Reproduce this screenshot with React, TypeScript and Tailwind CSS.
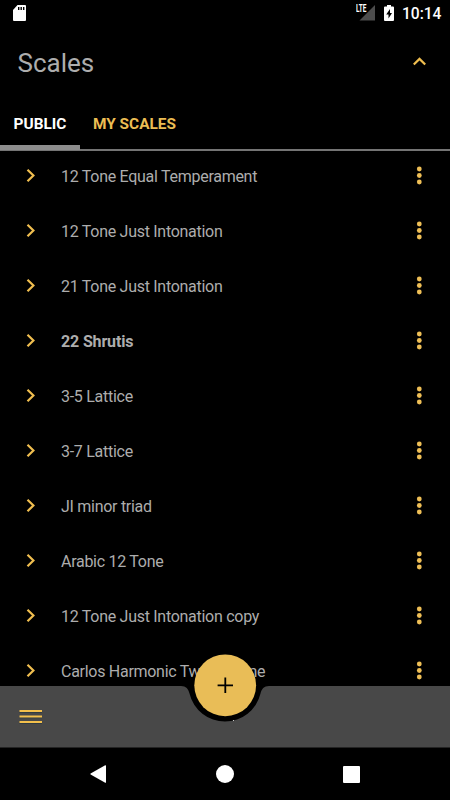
import React from "react";

const scales = [
  "12 Tone Equal Temperament",
  "12 Tone Just Intonation",
  "21 Tone Just Intonation",
  "22 Shrutis",
  "3-5 Lattice",
  "3-7 Lattice",
  "JI minor triad",
  "Arabic 12 Tone",
  "12 Tone Just Intonation copy",
  "Carlos Harmonic Twelve Tone",
];

const StatusBar = () => (
  <div className="flex h-[28px] shrink-0 items-center justify-between pl-[13px] pr-[8.500px] text-white">
    <svg width="13" height="16" viewBox="0 0 13 16" className="-mt-[2px]">
      <path d="M4.500 0H12a1 1 0 0 1 1 1v14a1 1 0 0 1-1 1H1a1 1 0 0 1-1-1V5z" fill="#fff" />
      <path d="M5.700 2v3M8.200 2v3M10.700 2v3" stroke="#000" strokeWidth="1.400" />
    </svg>
    <div className="flex items-center">
      <div className="relative -mt-[3px] mr-[9px] h-[17px] w-[20px]">
        <svg width="20" height="17" viewBox="0 0 20 17">
          <path d="M20 1v15.500H4.500z" fill="#4d4d4d" />
        </svg>
        <span className="absolute left-[1px] top-0 origin-left scale-x-[0.65] text-[10px] font-bold leading-[10px]">
          LTE
        </span>
      </div>
      <svg width="10" height="16" viewBox="0 0 10 16" className="-mt-[2px]">
        <path d="M3 0h4v1.500h2a1 1 0 0 1 1 1V15a1 1 0 0 1-1 1H1a1 1 0 0 1-1-1V2.500a1 1 0 0 1 1-1h2z" fill="#fff" />
        <path d="M6 4 2.200 9.600h2.300V13.500L8 8H6z" fill="#000" />
      </svg>
      <span className="ml-[7.500px] pt-px text-[15.600px] font-medium leading-[27px]">10:14</span>
    </div>
  </div>
);

const Header = () => (
  <div className="flex h-[69px] shrink-0 items-center justify-between pl-[17.500px] pr-[24px]">
    <h1 className="text-[26px] leading-[30px] text-[#adadad]">Scales</h1>
    <svg width="13" height="9" viewBox="0 0 13 9" className="-mt-[2px]" fill="none">
      <path d="M0.800 7.500 6.500 1.900 12.200 7.500" stroke="#f0be4f" strokeWidth="2.200" />
    </svg>
  </div>
);

const Tabs = () => (
  <div className="flex h-[54px] shrink-0 border-b-2 border-[#747474] text-[15.400px] font-bold">
    <button className="-mb-px flex w-[80px] items-center justify-center border-b-[5px] border-[#8e8e8e] pt-[8px] text-white">
      PUBLIC
    </button>
    <button className="flex items-center px-[13px] pt-[4px] text-[#ecbd53]">MY SCALES</button>
  </div>
);

const ScaleRow = ({ name, active }: { name: string; active: boolean }) => (
  <li className="flex h-[55px] items-center pl-[26px] pr-[28px]">
    <svg width="10" height="13" viewBox="0 0 10 13" fill="none" className="-mt-[3px]">
      <path d="M1.500 0.800 7.400 6.500 1.500 12.200" stroke="#f0be4f" strokeWidth="2.200" />
    </svg>
    <span
      className={`ml-[25px] flex-1 text-[16px] text-[#adadad] ${
        active ? "font-bold tracking-[-0.15px]" : "tracking-[-0.28px]"
      }`}
    >
      {name}
    </span>
    <svg width="6" height="19" viewBox="0 0 6 19" fill="#efbf56" className="-mt-[3px]">
      <circle cx="3.300" cy="3" r="2.400" />
      <circle cx="3.300" cy="9.500" r="2.400" />
      <circle cx="3.300" cy="16" r="2.400" />
    </svg>
  </li>
);

const BottomBar = () => (
  <div className="absolute inset-x-0 bottom-0 h-[62px]">
    {/* bar with the cradle cut out for the add button */}
    <svg width="450" height="62" viewBox="0 0 450 62" className="block">
      <path
        d="M0 0H181C186 0 188.500 3 189.500 7.500A36.500 36.500 0 0 0 260.500 7.500C261.500 3 264 0 269 0H450V61.500H0z"
        fill="#484848"
      />
      <rect x="233" y="34" width="1" height="1" fill="#c8c8c8" />
    </svg>
    <button className="absolute left-[19px] top-[23px]">
      <svg width="23" height="15" viewBox="0 0 23 15">
        <path d="M0.500 3.200H23M0.500 8.700H23M0.500 14.200H23" stroke="#27363f" strokeWidth="1" />
        <path d="M0.500 2H23M0.500 7.500H23M0.500 13H23" stroke="#f3bf4c" strokeWidth="2" />
      </svg>
    </button>
    <button className="absolute -top-[32px] left-[194px]">
      <svg width="63" height="63" viewBox="0 0 63 63" className="block">
        <circle cx="31.200" cy="31.300" r="30.900" fill="#e9bd57" />
        <path d="M31.300 23.600v15.400M23.600 31.300h15.400" stroke="#000" strokeWidth="1.800" />
      </svg>
    </button>
  </div>
);

const NavBar = () => (
  <div className="flex h-[52px] shrink-0 items-center justify-between pl-[90px] pr-[90px]">
    <svg width="16" height="18" viewBox="0 0 16 18" fill="#fff">
      <path d="M15.200 0.200Q16 0 16 0.800V17.200Q16 18 15.200 17.800L0.600 9.600Q0 9 0.600 8.400z" />
    </svg>
    <div className="size-[18px] rounded-full bg-white" />
    <div className="size-[17px] rounded-[1px] bg-white" />
  </div>
);

const App = () => {
  return (
    <div className="flex h-[800px] w-[450px] flex-col overflow-hidden bg-black font-['Roboto',sans-serif]">
      <StatusBar />
      <Header />
      <Tabs />
      <div className="relative min-h-0 flex-1">
        <ul className="-mt-[2px] h-full overflow-hidden">
          {scales.map((name) => (
            <ScaleRow key={name} name={name} active={name === "22 Shrutis"} />
          ))}
        </ul>
        <BottomBar />
      </div>
      <NavBar />
    </div>
  );
};

export default App;
